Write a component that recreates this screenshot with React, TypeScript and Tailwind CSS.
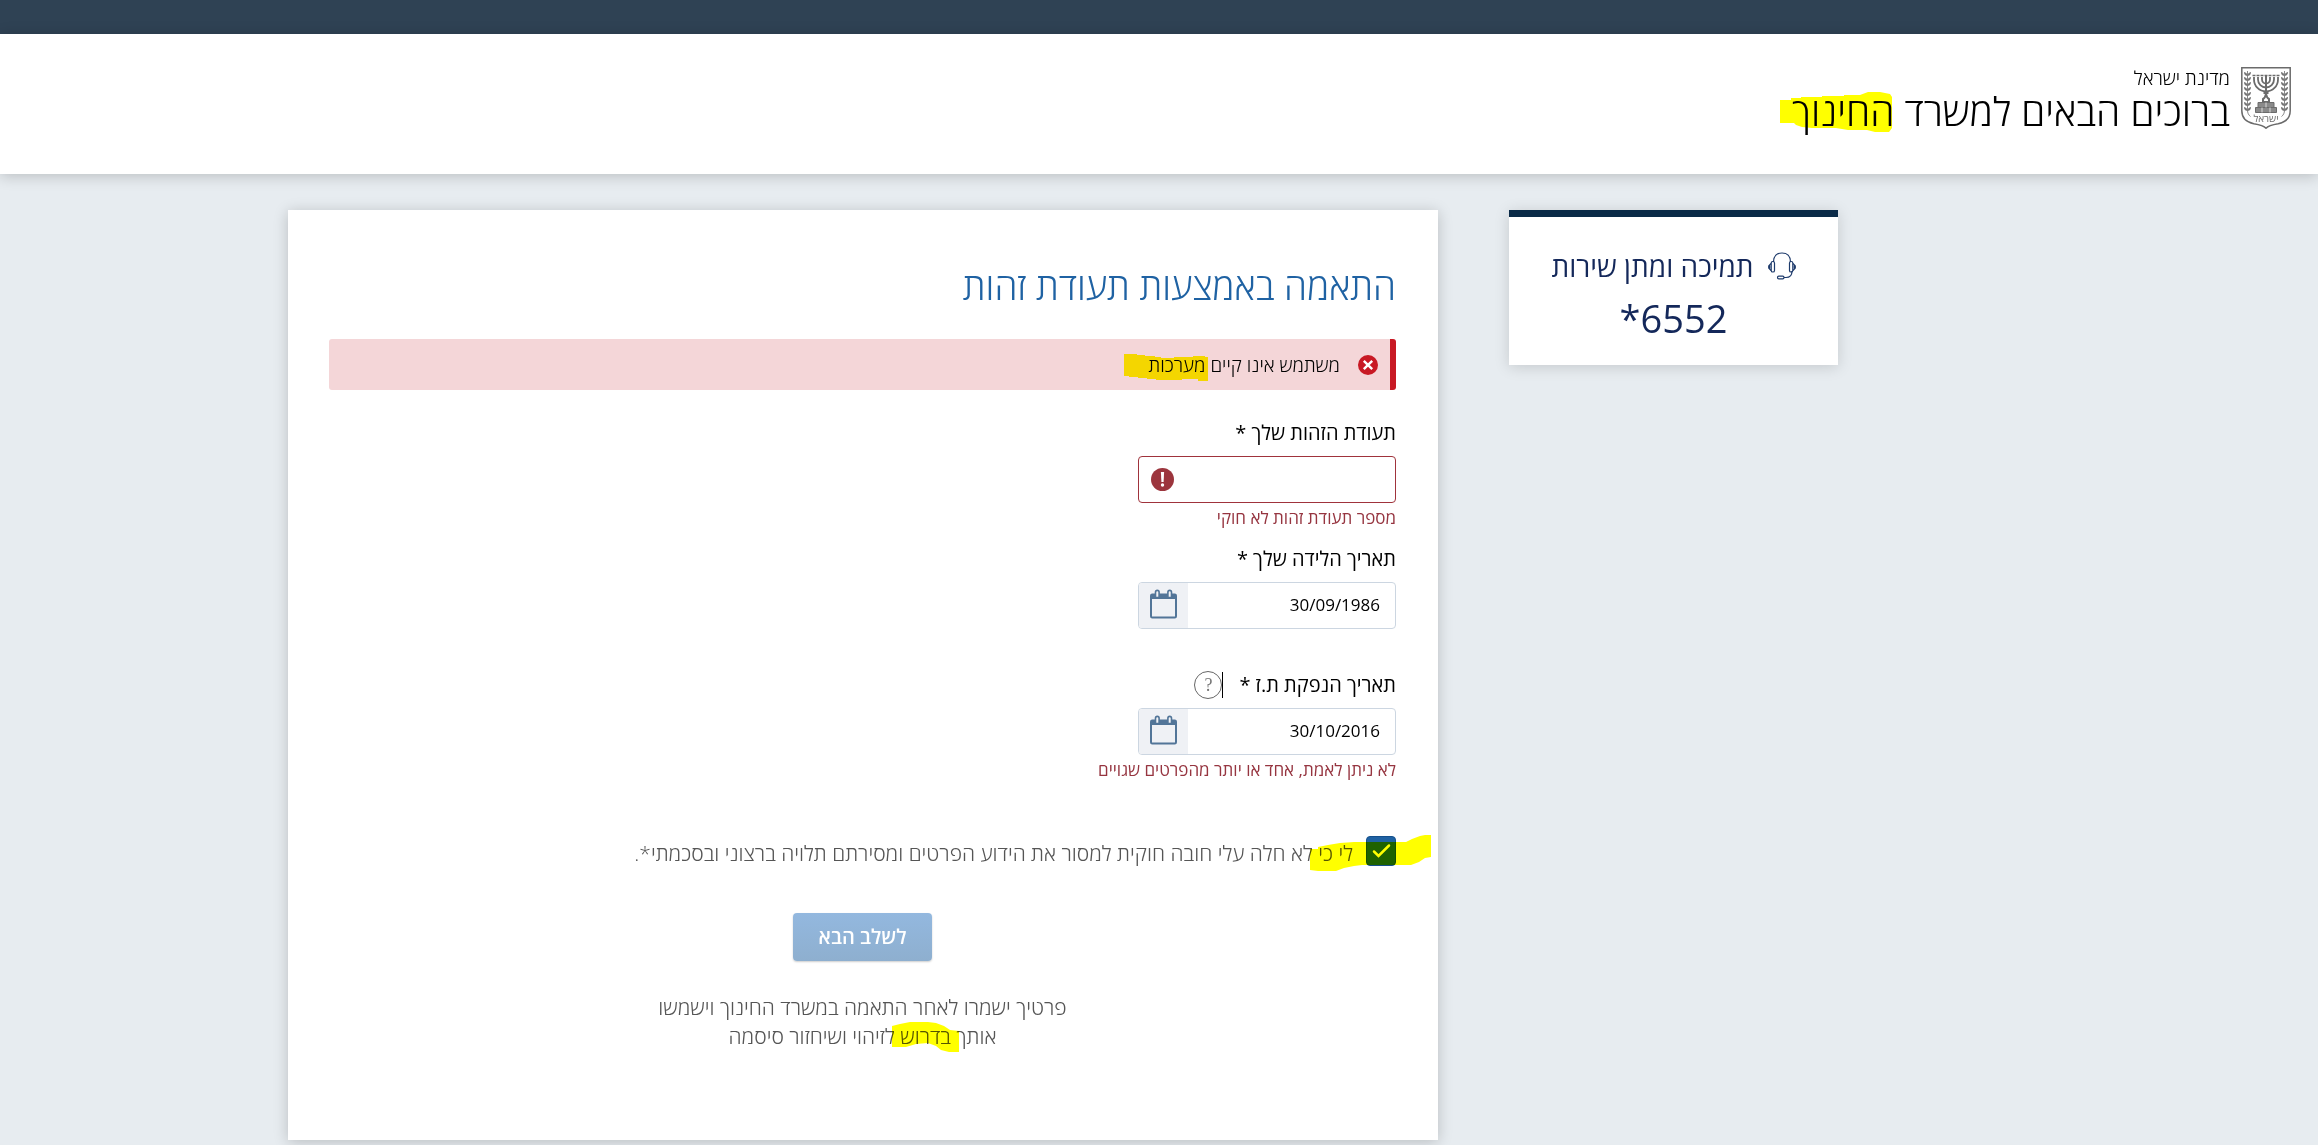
import { useState } from "react";
import type { ReactNode } from "react";

const MENORAH_ARMS = [4, 8, 12];
const LEAVES = [9, 14, 19, 24, 29, 34, 39, 44];

function Emblem() {
  return (
    <svg viewBox="0 0 50 62" className="w-[50px] h-[62px] shrink-0" fill="none" stroke="#6b6b6b">
      <path d="M.8.8h48.4v43c0 8-5 11.5-12 13-6 1-10 2-12.200 4.400-2.200-2.400-6.200-3.400-12.200-4.400-7-1.500-12-5-12-13z" strokeWidth="1.500" />
      {/* menorah */}
      <path d="M11.500 8.500h27" strokeWidth="1.600" strokeDasharray="3 1" />
      {MENORAH_ARMS.map((r) => (
        <path key={r} d={`M${25 - r} 10v2.500a${r} ${r} 0 0 0 ${r * 2} 0V10`} strokeWidth="1.800" />
      ))}
      <path d="M25 9v20M22.500 26h5M22 32c2-1 2.500-2.500 3-5 .5 2.500 1 4 3 5v3h-6z" strokeWidth="2" />
      <path d="M17 35.500h16v5H17zM14.500 40.500h21v5h-21z" fill="#8a8a8a" strokeWidth="1" />
      <path d="M25 35.500v5M21 40.500v5M29 40.500v5" stroke="#fff" strokeWidth=".7" />
      {/* olive branches */}
      <path d="M6.500 4v39c0 3 1 5 3 6.500M43.500 4v39c0 3-1 5-3 6.500" strokeWidth=".8" />
      {LEAVES.map((y) => (
        <g key={y} fill="#777" stroke="none">
          <path d={`M6.500 ${y}c-3-.5-3.500-2.500-3.500-4 2 .3 3.500 1.500 3.500 4zc3-.5 3.500-2.500 3.500-4-2 .3-3.500 1.500-3.500 4z`} />
          <path d={`M43.500 ${y}c-3-.5-3.500-2.500-3.500-4 2 .3 3.500 1.500 3.500 4zc3-.5 3.500-2.500 3.500-4-2 .3-3.500 1.500-3.500 4z`} />
        </g>
      ))}
      <text x="25" y="55" textAnchor="middle" fontSize="10" fontWeight="400" fill="#6b6b6b" stroke="none">ישראל</text>
    </svg>
  );
}

function HeadsetIcon() {
  return (
    <svg viewBox="0 0 28 28" className="w-7 h-7 shrink-0" fill="none" stroke="#1d3a6b" strokeWidth="1.200">
      <path d="M5.500 10C5.500 4 9 1 14 1s8.500 3 8.500 9M24 19c0 4-2 6.500-6 6.500h-2" />
      <rect x="3.200" y="9.500" width="3.300" height="10.500" rx="1.600" />
      <rect x="21.500" y="9.500" width="3.300" height="10.500" rx="1.600" />
      <path d="M3 11.500.7 14v2L3 18.500M25 11.500l2.300 2.500v2L25 18.500M1.800 13.500v3M26.200 13.500v3" />
      <rect x="9.500" y="24.200" width="6.500" height="2.600" rx="1.300" />
    </svg>
  );
}

function CalendarIcon() {
  return (
    <svg viewBox="0 0 27 30" className="w-[27px] h-[30px]" fill="none" stroke="#527598">
      <path d="M1 5h25v5H1z" fill="#527598" stroke="none" />
      <rect x="1" y="5.500" width="25" height="23" rx="1.200" strokeWidth="2" />
      <path d="M5.500 8.500V3.200a1.700 1.700 0 0 1 3.600 0v5.300zM17.900 8.500V3.200a1.700 1.700 0 0 1 3.600 0v5.300z" fill="#eff1f5" strokeWidth="1.600" />
    </svg>
  );
}

// yellow marker strokes over the text
function Marker({ viewBox, d, className }: { viewBox: string; d: string; className: string }) {
  return (
    <svg viewBox={viewBox} className={`absolute pointer-events-none mix-blend-multiply ${className}`} aria-hidden="true">
      <path d={d} fill="#ffff00" />
    </svg>
  );
}

interface FieldProps {
  id: string;
  label: string;
  error?: string;
  extra?: ReactNode;
  children: ReactNode;
}

function Field({ id, label, error, extra, children }: FieldProps) {
  return (
    <div className="mb-4">
      <div className="flex items-center h-[27px] mb-[10px]">
        <label htmlFor={id} className="text-[20px] leading-6 font-normal text-black">{label}</label>
        {extra}
      </div>
      {children}
      <p className="h-[22px] mt-1 text-[17px] leading-[22px] font-normal text-[#963540]">{error}</p>
    </div>
  );
}

function DateInput({ id, value }: { id: string; value: string }) {
  const [date, setDate] = useState(value);
  return (
    <div className="flex w-[258px] h-[47px] rounded-[4px] border border-[#ccd6e1] overflow-hidden">
      <input
        id={id}
        type="text"
        value={date}
        onChange={(e) => setDate(e.target.value)}
        className="flex-1 min-w-0 ps-[15px] pb-0.5 text-[17px] font-normal text-black outline-none"
      />
      <button type="button" aria-label="בחירת תאריך" className="w-[49px] bg-[#eff1f5] flex justify-center pt-[6px]">
        <CalendarIcon />
      </button>
    </div>
  );
}

export default function App() {
  const [agreed, setAgreed] = useState(true);

  return (
    <div dir="rtl" className="min-h-screen bg-[#e7ecf0] font-['Open_Sans','Noto_Sans',sans-serif] font-light">
      <div className="h-[34px] bg-[#2f4254]" />
      <header className="h-[140px] bg-white shadow-[0_2px_14px_rgba(0,0,0,0.2)] flex items-start gap-[11px] ps-[27px] pt-[33px]">
        <Emblem />
        <div className="text-black">
          <p className="text-[19px] leading-[22px]">מדינת ישראל</p>
          <h1 className="text-[39px] leading-[44px]">
            ברוכים הבאים למשרד{" "}
            <span className="relative">
              החינוך
              <Marker
                viewBox="0 0 112 41"
                className="-left-3 top-2 w-[112px] h-[41px]"
                d="M0 8h11V6h10V5h21V4h22V3h16l8-3h12l10 2 2 3v31l-3 4H95l-8-2H68l-12-2H32l-10-1-6-2-2-2H0z"
              />
            </span>
          </h1>
        </div>
      </header>

      <div className="flex items-start gap-[71px] ps-[480px] pe-[288px] pt-9 pb-[5px]">
        <aside className="w-[329px] h-[155px] shrink-0 bg-white border-t-[7px] border-[#0a2a47] shadow-[0_2px_14px_rgba(0,0,0,0.15)] pt-[30px] text-center text-[#14285a]">
          <div className="flex items-center justify-center gap-[14px]">
            <HeadsetIcon />
            <h2 className="text-[28px] leading-[38px] font-normal">תמיכה ומתן שירות</h2>
          </div>
          <p className="mt-[7px] text-[38px] leading-[52px] font-normal">6552*</p>
        </aside>

        <main className="flex-1 min-w-0 bg-white shadow-[0_2px_14px_rgba(0,0,0,0.2)] ps-[42px] pe-[41px] pt-[54px] pb-[89px]">
          <h2 className="text-[37px] leading-[44px] text-[#1f62a3]">התאמה באמצעות תעודת זהות</h2>

          <div role="alert" className="mt-[31px] h-[51px] rounded-[3px] border-s-[6px] border-[#c81924] bg-[#f4d6d8] flex items-center ps-3 gap-[18px]">
            <svg viewBox="0 0 20 20" className="w-5 h-5 shrink-0">
              <circle cx="10" cy="10" r="10" fill="#c81924" />
              <path d="M5.800 5.800l8.400 8.400M14.200 5.800l-8.400 8.400" stroke="#fff" strokeWidth="2.400" />
            </svg>
            <p className="text-[19px] leading-6 text-black">
              משתמש אינו קיים{" "}
              <span className="relative">
                מערכות
                <Marker
                  viewBox="0 0 84 27"
                  className="-left-6 top-0.5 w-[84px] h-[27px]"
                  d="M0 0h13v1h8v1h10v1h6v1h13V3h19V2h12v1h3v24H74v-2H58v1H32v-1h-9v-1h-9v-1H5v-1H0z"
                />
              </span>
            </p>
          </div>

          <form className="mt-[29px]" onSubmit={(e) => e.preventDefault()}>
            <Field id="idNumber" label="תעודת הזהות שלך *" error="מספר תעודת זהות לא חוקי">
              <div className="flex items-center w-[258px] h-[47px] rounded-[4px] border border-[#a0333c] pe-3">
                <input id="idNumber" type="text" className="flex-1 min-w-0 h-full ps-[15px] text-[17px] outline-none" />
                <svg viewBox="0 0 23 23" className="w-[23px] h-[23px] shrink-0">
                  <circle cx="11.500" cy="11.500" r="11.500" fill="#9c353d" />
                  <path d="M9.900 4h3.200l-.5 10h-2.200z" fill="#fff" />
                  <circle cx="11.500" cy="17" r="1.700" fill="#fff" />
                </svg>
              </div>
            </Field>

            <Field id="birthDate" label="תאריך הלידה שלך *">
              <DateInput id="birthDate" value="30/09/1986" />
            </Field>

            <Field
              id="issueDate"
              label="תאריך הנפקת ת.ז *"
              error="לא ניתן לאמת, אחד או יותר מהפרטים שגויים"
              extra={
                <span className="flex items-center ms-4">
                  <span className="w-px h-[26px] bg-black" />
                  <button type="button" className="w-7 h-7 rounded-full border border-[#666] text-[#777] text-lg leading-6 font-['Liberation_Serif',serif]">?</button>
                </span>
              }
            >
              <DateInput id="issueDate" value="30/10/2016" />
            </Field>

            <div className="relative mt-[55px] h-[30px] flex items-start gap-[13px]">
              <span className="relative w-[30px] h-[30px]">
                <input
                  id="agree"
                  type="checkbox"
                  checked={agreed}
                  onChange={(e) => setAgreed(e.target.checked)}
                  className="appearance-none block w-[30px] h-[30px] rounded-[4px] border border-[#14508c] checked:bg-[#1f62a3]"
                />
                {agreed && (
                  <svg viewBox="0 0 30 30" className="absolute inset-0 pointer-events-none" fill="none" stroke="#fff" strokeWidth="2.500" strokeLinecap="round">
                    <path d="M8 15.500l4.500 4.500L23 9.500" />
                  </svg>
                )}
              </span>
              <label htmlFor="agree" className="pt-0.5 text-[21px] leading-[30px] text-[#555]">
                לי כי לא חלה עלי חובה חוקית למסור את הידוע הפרטים ומסירתם תלויה ברצוני ובסכמתי*.
              </label>
              <Marker
                viewBox="0 0 121 36"
                className="-right-[35px] -top-px w-[121px] h-[36px]"
                d="M0 14h8v-2l10-2 12-2 14-1h52l6-3 8-3 5-1h6v22l-6 1-6 4-8 3H52l-8 1-10 2-8 3H8l-8-1z"
              />
            </div>

            <div className="mt-[47px] text-center">
              <button
                type="submit"
                className="w-[139px] h-12 rounded-[4px] bg-linear-to-b from-[#93b8df] to-[#8eafcf] shadow-[0_1px_2px_rgba(0,0,0,0.2)] text-[20px] leading-6 font-semibold text-white"
              >
                לשלב הבא
              </button>
              <p className="mt-8 text-[21px] leading-[29px] text-[#555]">
                פרטיך ישמרו לאחר התאמה במשרד החינוך וישמשו
                <br />
                אותך{" "}
                <span className="relative">
                  בדרוש
                  <Marker
                    viewBox="0 0 67 30"
                    className="-left-2 top-0 w-[67px] h-[30px]"
                    d="M0 4l8-2 10-2h18l8 1 8 3 6 4 9 1v21H57l-8-2-5-4-8-3-12 1-10 3H0z"
                  />
                </span>{" "}
                לזיהוי ושיחזור סיסמה
              </p>
            </div>
          </form>
        </main>
      </div>
    </div>
  );
}
